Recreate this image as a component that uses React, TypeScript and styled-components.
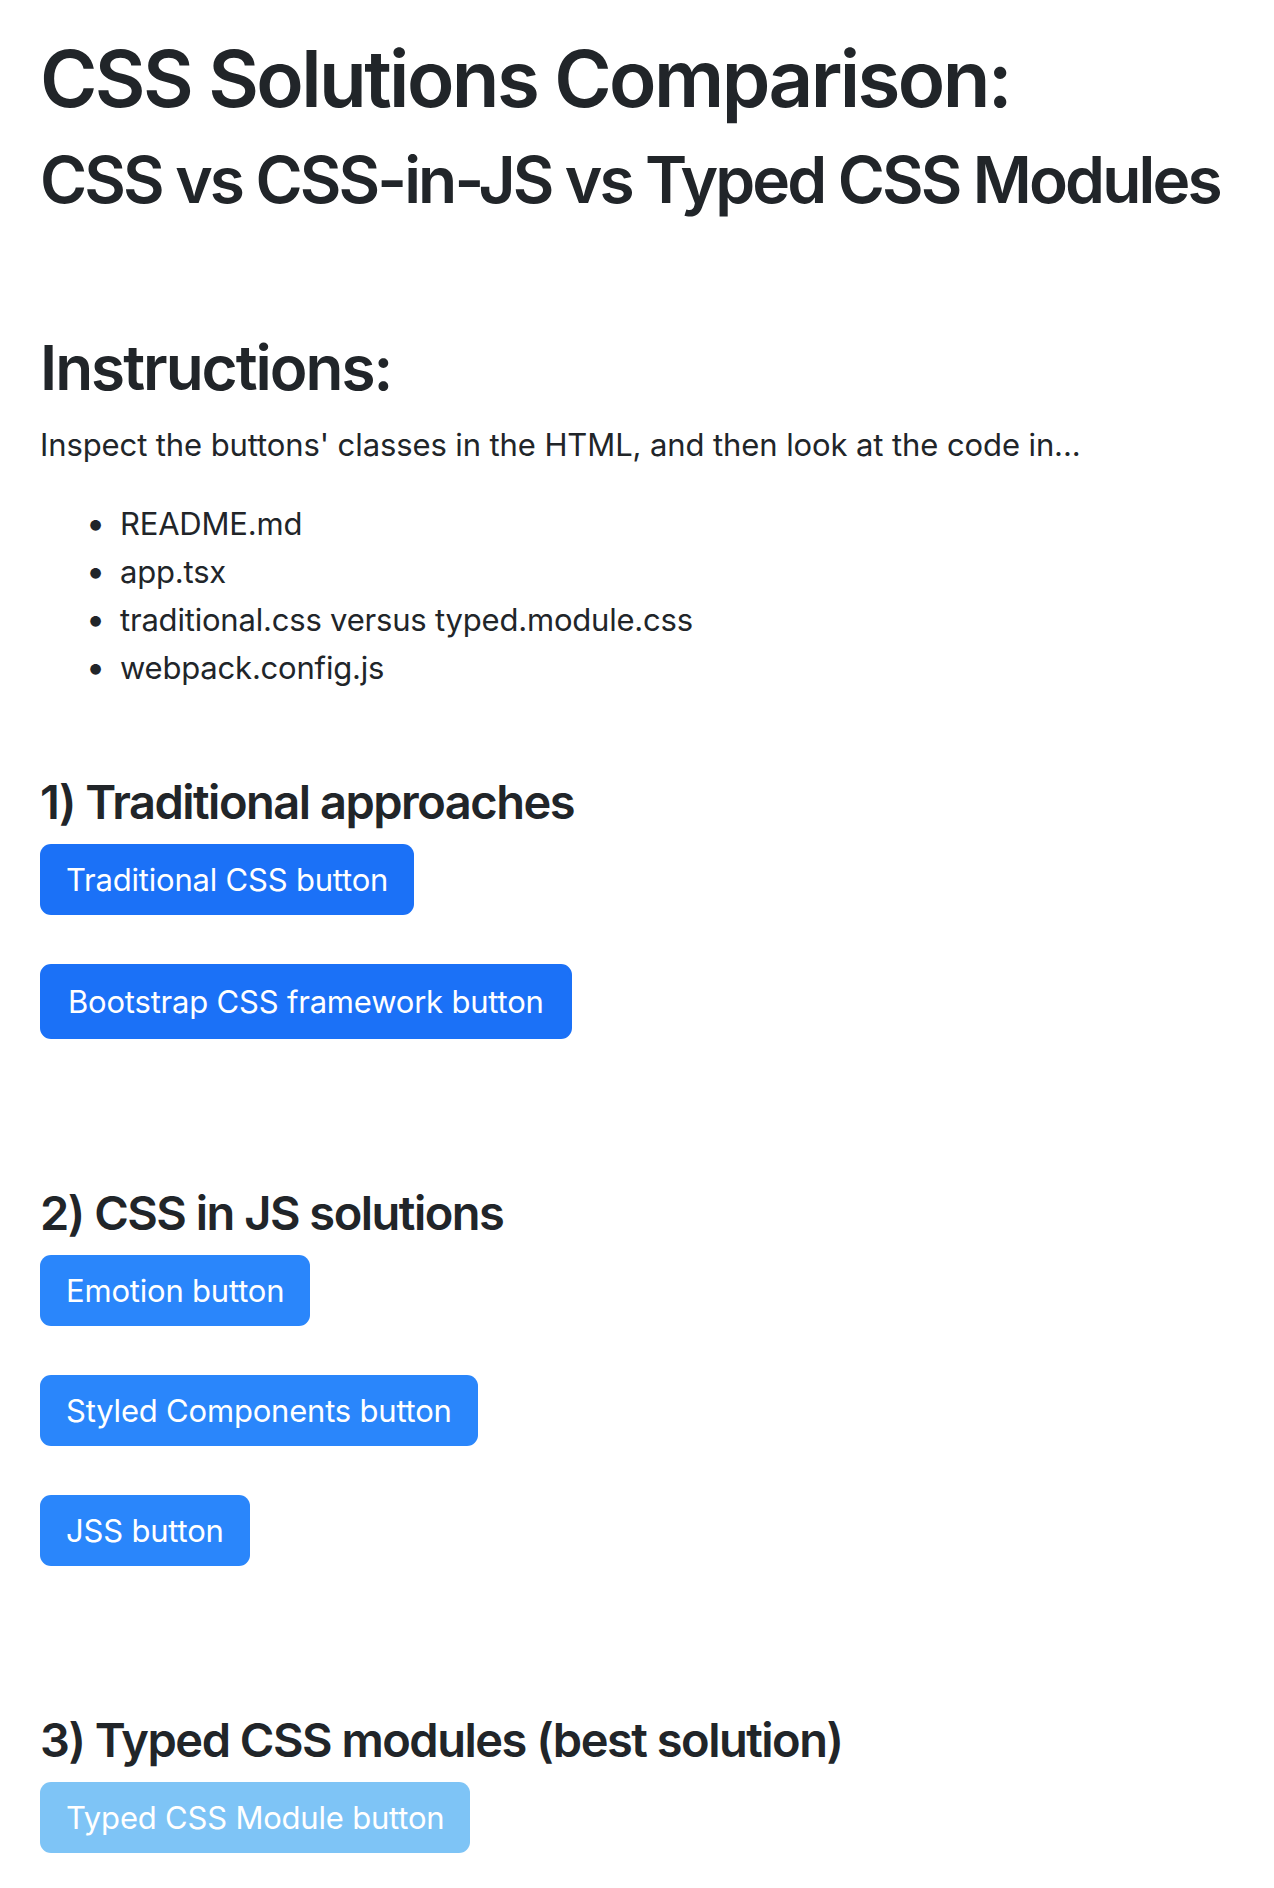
import React from "react";
import styled, { createGlobalStyle, css } from "styled-components";

const GlobalStyle = createGlobalStyle`
	html, body {
		margin: 0;
		padding: 0;
		background: #ffffff;
	}
	body {
		font-family: Inter, "Noto Sans", "Liberation Sans", sans-serif;
		color: #212529;
	}
`;

type Tone = "bootstrap" | "traditional" | "cssInJs" | "typed";

const FILES = ["README.md", "app.tsx", "traditional.css versus typed.module.css", "webpack.config.js"];

const SECTIONS: { title: string; buttons: { label: string; tone: Tone }[] }[] = [
	{
		title: "1) Traditional approaches",
		buttons: [
			{ label: "Traditional CSS button", tone: "traditional" },
			{ label: "Bootstrap CSS framework button", tone: "bootstrap" },
		],
	},
	{
		title: "2) CSS in JS solutions",
		buttons: [
			{ label: "Emotion button", tone: "cssInJs" },
			{ label: "Styled Components button", tone: "cssInJs" },
			{ label: "JSS button", tone: "cssInJs" },
		],
	},
	{
		title: "3) Typed CSS modules (best solution)",
		buttons: [{ label: "Typed CSS Module button", tone: "typed" }],
	},
];

const App: React.FC = () => {
	return (
		<>
			<GlobalStyle />
			<Page>
				<Title>CSS Solutions Comparison:</Title>
				<Subtitle>CSS vs CSS-in-JS vs Typed CSS Modules</Subtitle>

				<Heading>Instructions:</Heading>
				<Paragraph>Inspect the buttons' classes in the HTML, and then look at the code in...</Paragraph>
				<FileList>
					{FILES.map((file) => (
						<FileItem key={file}>{file}</FileItem>
					))}
				</FileList>

				{SECTIONS.map((section, index) => (
					<Section key={section.title} first={index === 0}>
						<SectionTitle>{section.title}</SectionTitle>
						<Buttons>
							{section.buttons.map((button) => (
								<Button key={button.label} tone={button.tone}>
									{button.label}
								</Button>
							))}
						</Buttons>
					</Section>
				))}
			</Page>
		</>
	);
};
export default App;

const Page = styled.div`
	padding: 32px 40px 0;
`;

const Title = styled.h1`
	margin: 0;
	font-size: 78px;
	line-height: 94px;
	font-weight: 600;
	letter-spacing: -2.6px;
	white-space: nowrap;
`;

const Subtitle = styled.h2`
	margin: 14px 0 0;
	font-size: 64px;
	line-height: 80px;
	font-weight: 600;
	letter-spacing: -2.85px;
	white-space: nowrap;
`;

const Heading = styled.h2`
	margin: 110px 0 0;
	font-size: 62px;
	line-height: 76px;
	font-weight: 600;
	letter-spacing: -2px;
`;

const Paragraph = styled.p`
	margin: 15px 0 0;
	font-size: 31px;
	line-height: 48px;
	letter-spacing: -0.1px;
`;

const FileList = styled.ul`
	margin: 31px 0 0;
	padding-left: 80px;
	list-style: none;
	font-size: 31px;
	line-height: 48px;
	letter-spacing: -0.2px;
`;

const FileItem = styled.li`
	height: 48px;

	&::before {
		content: "•";
		display: inline-block;
		width: 34px;
		margin-left: -34px;
		font-size: 34px;
		line-height: 1;
	}
`;

const Section = styled.section<{ first?: boolean }>`
	margin-top: ${(props) => (props.first ? "82px" : "146px")};
`;

const SectionTitle = styled.h4`
	margin: 0;
	font-size: 47px;
	line-height: 56px;
	font-weight: 600;
	letter-spacing: -1.5px;
`;

const Buttons = styled.div`
	display: flex;
	flex-direction: column;
	align-items: flex-start;
	gap: 49px;
	margin-top: 14px;
`;

const Button = styled.button<{ tone: Tone }>`
	font-family: inherit;
	font-size: 31px;
	line-height: 47px;
	font-weight: 400;
	letter-spacing: -0.2px;
	color: #ffffff;
	border: none;
	border-radius: 11px;
	padding: 12px 26px;
	cursor: pointer;

	${(props) =>
		props.tone === "traditional" &&
		css`
			background-color: #1b71f7;
		`}

	${(props) =>
		props.tone === "bootstrap" &&
		css`
			background-color: #1b71f7;
			border: 2px solid #1b71f7;
		`}

	${(props) =>
		props.tone === "cssInJs" &&
		css`
			background-color: #2a86fb;
		`}

	${(props) =>
		props.tone === "typed" &&
		css`
			background-color: #7ec4f6;
		`}
`;
